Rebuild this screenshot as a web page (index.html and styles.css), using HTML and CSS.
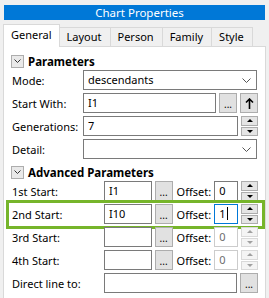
FILE: index.html
```html
<!DOCTYPE html>
<html lang="en">
<head>
    <meta charset="UTF-8">
    <title>Chart Properties</title>
    <link rel="stylesheet" href="styles.css">
</head>
<body>
    <div class="window">
        <div class="titlebar">Chart Properties</div>

        <div class="tabs">
            <div class="tab active">General</div>
            <div class="tab">Layout</div>
            <div class="tab">Person</div>
            <div class="tab">Family</div>
            <div class="tab">Style</div>
        </div>

        <div class="panel">
            <!-- Parameters -->
            <div class="section">
                <span class="toggle"><svg width="7" height="4" viewBox="0 0 7 4"><polyline points="0.5,0.5 3.5,3.5 6.5,0.5" fill="none" stroke="#333" stroke-width="1"/></svg></span>
                <span class="section-title">Parameters</span>
            </div>
            <div class="row">
                <label class="label">Mode:</label>
                <div class="box combo">descendants<svg class="chev" width="9" height="5" viewBox="0 0 9 5"><polyline points="0.5,0.5 4.5,4.5 8.5,0.5" fill="none" stroke="#555" stroke-width="1"/></svg></div>
            </div>
            <div class="row">
                <label class="label">Start With:</label>
                <div class="box grow">I1</div>
                <div class="btn dots">...</div>
                <div class="btn"><svg width="9" height="11" viewBox="0 0 9 11"><path d="M4.5 1 L4.5 11 M1 4.5 L4.5 1 L8 4.5" fill="none" stroke="#000" stroke-width="1.6"/></svg></div>
            </div>
            <div class="row">
                <label class="label">Generations:</label>
                <div class="box grow">7</div>
                <div class="spin"><span class="up"></span><span class="down"></span></div>
            </div>
            <div class="row">
                <label class="label">Detail:</label>
                <div class="box combo"><svg class="chev" width="9" height="5" viewBox="0 0 9 5"><polyline points="0.5,0.5 4.5,4.5 8.5,0.5" fill="none" stroke="#555" stroke-width="1"/></svg></div>
            </div>

            <!-- Advanced Parameters -->
            <div class="section second">
                <span class="toggle"><svg width="7" height="4" viewBox="0 0 7 4"><polyline points="0.5,0.5 3.5,3.5 6.5,0.5" fill="none" stroke="#333" stroke-width="1"/></svg></span>
                <span class="section-title">Advanced Parameters</span>
            </div>
            <div class="row adv">
                <label class="label wide">1st Start:</label>
                <div class="box start">I1</div>
                <div class="btn dots">...</div>
                <span class="offset-label">Offset:</span>
                <div class="box offset">0</div>
                <div class="spin"><span class="up"></span><span class="down"></span></div>
            </div>
            <div class="row adv highlight">
                <label class="label wide">2nd Start:</label>
                <div class="box start">I10</div>
                <div class="btn dots">...</div>
                <span class="offset-label">Offset:</span>
                <div class="box offset focused">1<span class="caret"></span></div>
                <div class="spin"><span class="up"></span><span class="down"></span></div>
            </div>
            <div class="row adv">
                <label class="label wide">3rd Start:</label>
                <div class="box start"></div>
                <div class="btn dots">...</div>
                <span class="offset-label">Offset:</span>
                <div class="box offset disabled">0</div>
                <div class="spin disabled"><span class="up"></span><span class="down"></span></div>
            </div>
            <div class="row adv">
                <label class="label wide">4th Start:</label>
                <div class="box start"></div>
                <div class="btn dots">...</div>
                <span class="offset-label">Offset:</span>
                <div class="box offset disabled">0</div>
                <div class="spin disabled"><span class="up"></span><span class="down"></span></div>
            </div>
            <div class="row adv">
                <label class="label wide">Direct line to:</label>
                <div class="box grow"></div>
                <div class="btn dots">...</div>
            </div>
        </div>
    </div>
</body>
</html>
```

FILE: styles.css
```css
body {
    margin: 0;
    background-color: #f0f0f0;
    font-family: "Noto Sans", "Open Sans", sans-serif;
    font-size: 11px;
    color: #000;
}
.window {
    width: 269px;
    height: 298px;
    display: flex;
    flex-direction: column;
    overflow: hidden;
}
.titlebar {
    margin: 5px 4px 0;
    height: 15px;
    line-height: 15px;
    padding-left: 10px;
    background-color: #0078d7;
    color: #fff;
    text-align: center;
    font-size: 11.5px;
}

/* tabs */
.tabs {
    display: flex;
    align-items: flex-end;
    margin-top: 4px;
    padding-left: 3px;
    height: 22px;
    position: relative;
    z-index: 1;
}
.tab {
    height: 18px;
    line-height: 17px;
    padding: 0 8px 0 7px;
    background-color: #f0f0f0;
    border: 1px solid #d9d9d9;
    border-bottom: none;
    margin-left: -1px;
}
.tab.active {
    height: 22px;
    line-height: 20px;
    margin-left: 0;
    margin-bottom: -1px;
    padding: 0 7px;
    background-color: #fff;
}

/* panel */
.panel {
    flex: 1;
    margin: 0 3px;
    background-color: #fff;
    border: 1px solid #d9d9d9;
    border-bottom: none;
    padding: 7px 7px 0 7px;
}
.section {
    display: flex;
    align-items: center;
    height: 14px;
    margin-bottom: 2px;
}
.section.second {
    margin-top: 6px;
}
.toggle {
    width: 11px;
    height: 11px;
    border: 1px solid #adadad;
    background-color: #e9e9e9;
    display: flex;
    align-items: center;
    justify-content: center;
    margin-right: 4px;
}
.section-title {
    font-weight: bold;
    font-size: 11.5px;
}

/* rows */
.row {
    display: flex;
    align-items: center;
    height: 20px;
    margin-bottom: 3px;
    padding-left: 1px;
    position: relative;
}
.label {
    width: 71px;
    flex-shrink: 0;
}
.label.wide {
    width: 92px;
}
.box {
    height: 18px;
    line-height: 18px;
    border: 1px solid #7a7a7a;
    background-color: #fff;
    padding: 0 4px;
    box-sizing: content-box;
    position: relative;
}
.grow {
    flex: 1;
}
.combo {
    flex: 1;
    margin-right: 1px;
}
.chev {
    position: absolute;
    right: 5px;
    top: 7px;
}
.btn {
    width: 16px;
    height: 18px;
    margin-left: 3px;
    border: 1px solid #adadad;
    background-color: #e1e1e1;
    display: flex;
    align-items: center;
    justify-content: center;
    font-size: 10px;
    line-height: 10px;
}
.btn.dots {
    align-items: flex-end;
    height: 15px;
    padding-bottom: 3px;
}
.spin {
    width: 17px;
    height: 20px;
    margin-left: 3px;
    display: flex;
    flex-direction: column;
    gap: 1px;
}
.spin span {
    flex: 1;
    border: 1px solid #adadad;
    background-color: #e5e5e5;
    display: flex;
    align-items: center;
    justify-content: center;
}
.spin .up::before {
    content: "";
    border-left: 3px solid transparent;
    border-right: 3px solid transparent;
    border-bottom: 3px solid #000;
}
.spin .down::before {
    content: "";
    border-left: 3px solid transparent;
    border-right: 3px solid transparent;
    border-top: 3px solid #000;
}
.spin.disabled span {
    border-color: #d9d9d9;
    background-color: #f4f4f4;
}
.spin.disabled .up::before {
    border-bottom-color: #a0a0a0;
}
.spin.disabled .down::before {
    border-top-color: #a0a0a0;
}

/* advanced rows */
.start {
    width: 38px;
}
.offset-label {
    margin-left: 4px;
    width: 38px;
}
.offset {
    width: 14px;
    padding: 0 4px;
}
.offset.focused {
    border-color: #0078d7;
}
.offset.disabled {
    border-color: #cccccc;
    color: #6d6d6d;
}
.caret {
    display: inline-block;
    width: 1px;
    height: 13px;
    background-color: #000;
    vertical-align: -2px;
    margin-left: 1px;
}
.highlight::after {
    content: "";
    position: absolute;
    left: -5px;
    right: -7px;
    top: -4px;
    bottom: -5px;
    border: 3px solid #76b52a;
    pointer-events: none;
}
```
